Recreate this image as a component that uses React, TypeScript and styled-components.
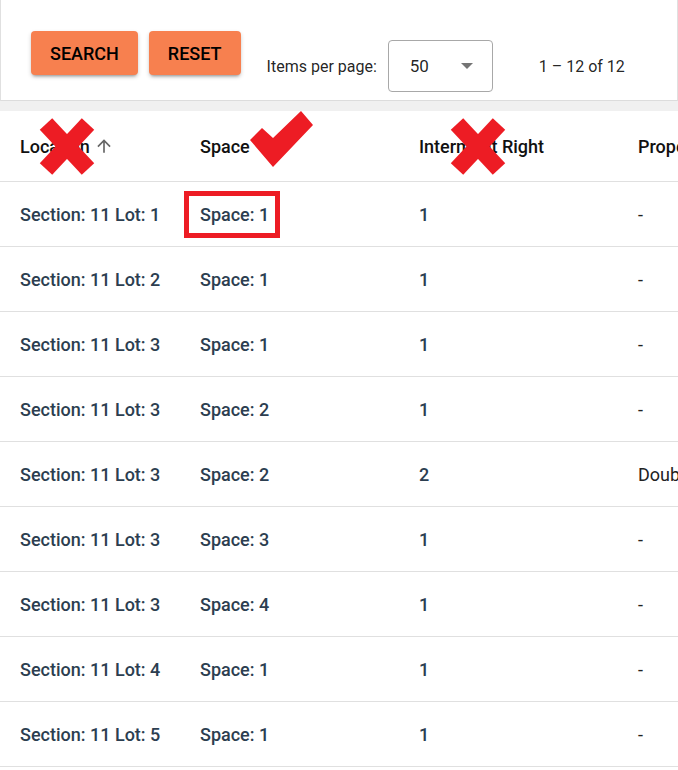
import { createGlobalStyle, styled } from "styled-components";

const GlobalStyle = createGlobalStyle`
  html, body {
    margin: 0;
    padding: 0;
    overflow: hidden;
    background: #ffffff;
    font-family: Roboto, "Noto Sans", sans-serif;
  }
`;

type Row = { location: string; space: string; internal: string; prop: string };

const ROWS: Row[] = [
  { location: "Section: 11 Lot: 1", space: "Space: 1", internal: "1", prop: "-" },
  { location: "Section: 11 Lot: 2", space: "Space: 1", internal: "1", prop: "-" },
  { location: "Section: 11 Lot: 3", space: "Space: 1", internal: "1", prop: "-" },
  { location: "Section: 11 Lot: 3", space: "Space: 2", internal: "1", prop: "-" },
  { location: "Section: 11 Lot: 3", space: "Space: 2", internal: "2", prop: "Double" },
  { location: "Section: 11 Lot: 3", space: "Space: 3", internal: "1", prop: "-" },
  { location: "Section: 11 Lot: 3", space: "Space: 4", internal: "1", prop: "-" },
  { location: "Section: 11 Lot: 4", space: "Space: 1", internal: "1", prop: "-" },
  { location: "Section: 11 Lot: 5", space: "Space: 1", internal: "1", prop: "-" },
];

export default function App() {
  return (
    <Page>
      <GlobalStyle />
      <Toolbar>
        <ButtonGroup>
          <ActionButton>SEARCH</ActionButton>
          <ActionButton>RESET</ActionButton>
        </ButtonGroup>
        <Paginator>
          <PageLabel>Items per page:</PageLabel>
          <PageSelect>
            <span>50</span>
            <SelectArrow />
          </PageSelect>
          <RangeLabel>1 – 12 of 12</RangeLabel>
        </Paginator>
      </Toolbar>
      <Divider />
      <TableWrap>
        <Table>
          <colgroup>
            <col style={{ width: 180 }} />
            <col style={{ width: 219 }} />
            <col style={{ width: 219 }} />
            <col style={{ width: 200 }} />
          </colgroup>
          <thead>
            <tr>
              <HeadCell>
                <HeadInner>
                  Location
                  <svg width="20" height="20" viewBox="0 0 24 24" fill="#666666">
                    <path d="M4 12l1.41 1.41L11 7.83V20h2V7.83l5.58 5.59L20 12l-8-8-8 8z" />
                  </svg>
                </HeadInner>
              </HeadCell>
              <HeadCell>Space</HeadCell>
              <HeadCell>Interment Right</HeadCell>
              <HeadCell>Property Type</HeadCell>
            </tr>
          </thead>
          <tbody>
            {ROWS.map((r, i) => (
              <tr key={i}>
                <BodyCell>{r.location}</BodyCell>
                <BodyCell>{r.space}</BodyCell>
                <BodyCell>{r.internal}</BodyCell>
                <BodyCell $plain>{r.prop}</BodyCell>
              </tr>
            ))}
          </tbody>
        </Table>

        <Mark $x={40} $y={7}>
          <CrossIcon />
        </Mark>
        <Mark $x={451} $y={7}>
          <CrossIcon />
        </Mark>
        <Mark $x={250} $y={0}>
          <svg width="64" height="57" viewBox="0 0 64 57">
            <polygon points="0,29 12,17 23,27 51,0 63,14 23,56" fill="#ed1c24" />
          </svg>
        </Mark>
        <HighlightBox />
      </TableWrap>
    </Page>
  );
}

function CrossIcon() {
  return (
    <svg width="54" height="57" viewBox="0 0 54 57" style={{ overflow: "visible" }}>
      <g stroke="#ed1c24" strokeWidth="17">
        <line x1="6" y1="6" x2="48" y2="51" />
        <line x1="48" y1="6" x2="6" y2="51" />
      </g>
    </svg>
  );
}

const Page = styled.div`
  width: 678px;
  overflow: hidden;
`;

const Toolbar = styled.div`
  display: flex;
  align-items: flex-start;
  box-sizing: border-box;
  height: 101px;
  padding: 31px 0 0 30px;
  border-left: 1px solid #e0e0e0;
  border-right: 1px solid #e0e0e0;
  border-bottom: 1px solid #dcdcdc;
  background: #ffffff;
`;

const ButtonGroup = styled.div`
  display: flex;
  gap: 11px;
`;

const ActionButton = styled.button`
  height: 44px;
  padding: 0 19px;
  border: none;
  border-radius: 4px;
  background: #f7804f;
  color: #000000;
  font-family: Roboto, sans-serif;
  font-size: 18px;
  font-weight: 500;
  letter-spacing: 0;
  box-shadow: 0 3px 3px -2px rgba(0, 0, 0, 0.3), 0 2px 4px rgba(0, 0, 0, 0.18);
  cursor: pointer;
`;

const Paginator = styled.div`
  display: flex;
  align-items: center;
  margin: 9px 0 0 26px;
  height: 52px;
`;

const PageLabel = styled.span`
  font-size: 16px;
  color: rgba(0, 0, 0, 0.87);
  margin-right: 11px;
`;

const PageSelect = styled.div`
  display: flex;
  align-items: center;
  justify-content: space-between;
  box-sizing: border-box;
  width: 105px;
  height: 52px;
  padding: 0 19px 0 21px;
  border: 1px solid #a8a8a8;
  border-radius: 4px;
  font-size: 17px;
  color: rgba(0, 0, 0, 0.87);
`;

const SelectArrow = styled.span`
  width: 0;
  height: 0;
  border-left: 6px solid transparent;
  border-right: 6px solid transparent;
  border-top: 6px solid #757575;
`;

const RangeLabel = styled.span`
  margin-left: 46px;
  font-size: 16px;
  color: rgba(0, 0, 0, 0.87);
`;

const Divider = styled.div`
  height: 10px;
  background: #f0f0f0;
`;

const TableWrap = styled.div`
  position: relative;
`;

const Table = styled.table`
  border-collapse: collapse;
  table-layout: fixed;
  width: 818px;
`;

const HeadCell = styled.th`
  height: 70px;
  padding: 0 0 0 20px;
  text-align: left;
  white-space: nowrap;
  overflow: hidden;
  border-bottom: 1px solid #e0e0e0;
  font-size: 18px;
  font-weight: 500;
  color: #111111;
`;

const HeadInner = styled.span`
  display: inline-flex;
  align-items: center;
  gap: 4px;
`;

const BodyCell = styled.td<{ $plain?: boolean }>`
  height: 64px;
  padding: 0 0 0 20px;
  white-space: nowrap;
  overflow: hidden;
  border-bottom: 1px solid #e0e0e0;
  font-size: 18px;
  font-weight: ${({ $plain }) => ($plain ? 400 : 500)};
  color: ${({ $plain }) => ($plain ? "#222222" : "#2c3e50")};
`;

const Mark = styled.div<{ $x: number; $y: number }>`
  position: absolute;
  left: ${({ $x }) => $x}px;
  top: ${({ $y }) => $y}px;
  line-height: 0;
`;

const HighlightBox = styled.div`
  position: absolute;
  left: 184px;
  top: 80px;
  width: 96px;
  height: 47px;
  box-sizing: border-box;
  border: 5px solid #ed1c24;
`;
